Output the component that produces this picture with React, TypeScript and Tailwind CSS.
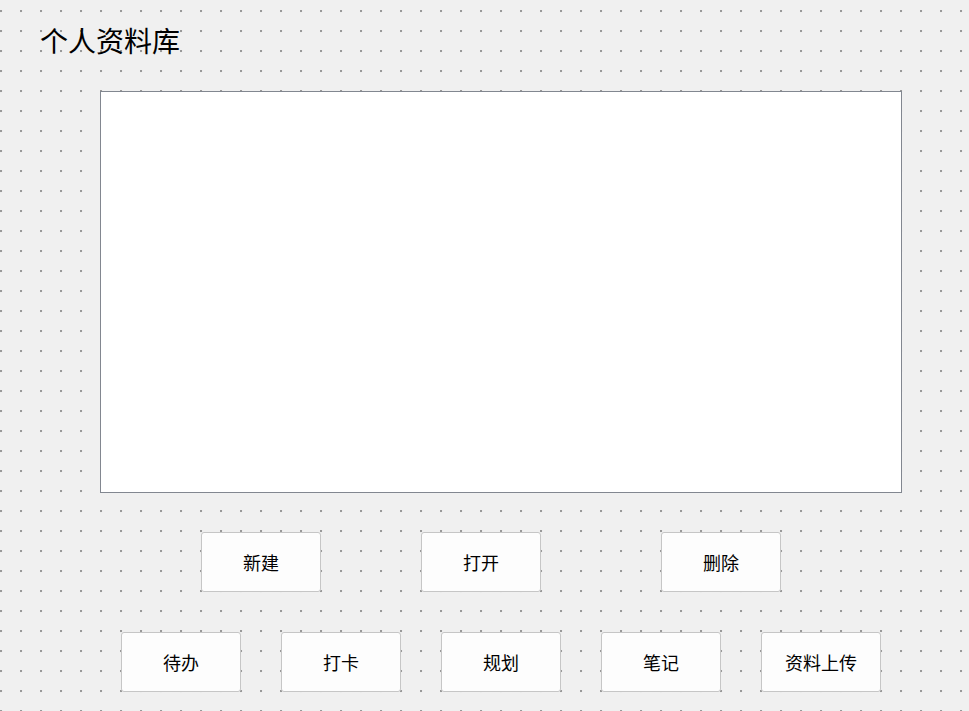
import React from "react";

const font = { fontFamily: '"Noto Sans CJK SC", "Noto Sans", sans-serif' };

function Btn({ label, className = "" }: { label: string; className?: string }) {
  return (
    <button
      className={
        "w-[120px] h-[60px] shrink-0 rounded-[3px] border border-[#c6c6c6] bg-[#fdfdfd] text-[18px] leading-none text-black flex items-center justify-center " +
        className
      }
    >
      {label}
    </button>
  );
}

export default function App() {
  return (
    <div
      style={font}
      className="w-[969px] h-[711px] overflow-hidden bg-[#f0f0f0] bg-[radial-gradient(circle_at_1px_1px,#999999_1.1px,transparent_1.6px)] bg-[length:20px_20px] bg-[position:0px_10px] pt-[26px]"
    >
      <h1 className="pl-[40px] text-[28px] leading-[28px] text-black">个人资料库</h1>

      {/* list area */}
      <div className="ml-[100px] mt-[37px] w-[802px] h-[402px] border border-[#828790] bg-white" />

      <div className="flex mt-[39px] pl-[201px]">
        <Btn label="新建" />
        <Btn label="打开" className="ml-[100px]" />
        <Btn label="删除" className="ml-[120px]" />
      </div>

      <div className="flex gap-[40px] mt-[40px] pl-[121px]">
        <Btn label="待办" />
        <Btn label="打卡" />
        <Btn label="规划" />
        <Btn label="笔记" />
        <Btn label="资料上传" />
      </div>
    </div>
  );
}
